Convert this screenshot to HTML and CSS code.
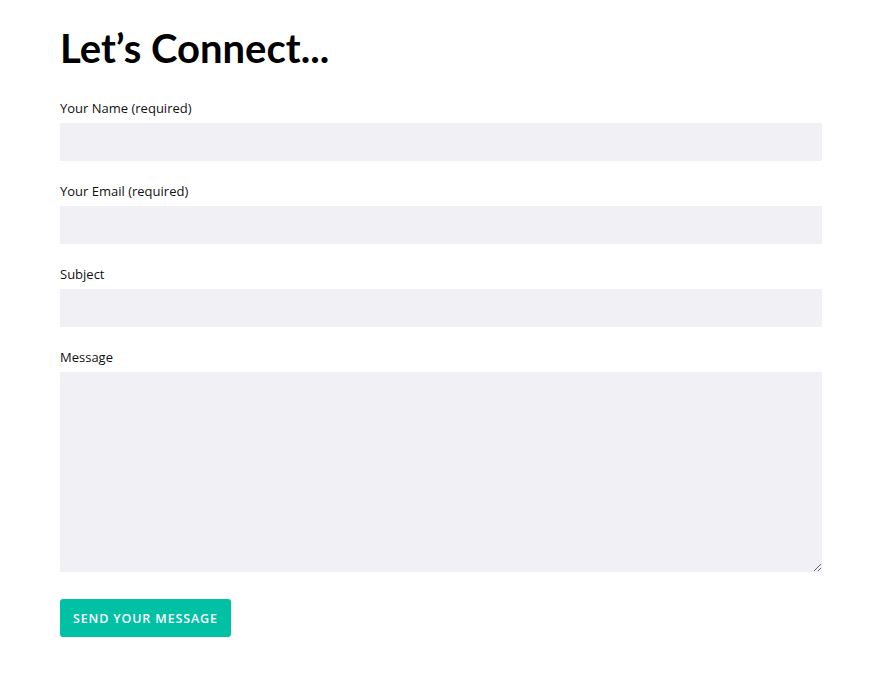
FILE: index.html
```html
<!DOCTYPE html>
<html>
<head>
<meta charset="utf-8">
<link rel="stylesheet" href="styles.css">
</head>
<body>
<main class="page">
  <h1 class="title">Let’s Connect...</h1>
  <form class="form">
    <div class="field">
      <label class="label">Your Name (required)</label>
      <input class="input" type="text">
    </div>
    <div class="field">
      <label class="label">Your Email (required)</label>
      <input class="input" type="text">
    </div>
    <div class="field">
      <label class="label">Subject</label>
      <input class="input" type="text">
    </div>
    <div class="field">
      <label class="label">Message</label>
      <textarea class="textarea"></textarea>
    </div>
    <div class="actions">
      <button class="button" type="button">SEND YOUR MESSAGE</button>
    </div>
  </form>
</main>
</body>
</html>
```
FILE: styles.css
```css
html, body {
  margin: 0;
  padding: 0;
  background: #ffffff;
}
.page {
  padding: 24px 50px 0 60px;
  width: 762px;
}
.title {
  margin: 0;
  font-family: Lato, "Liberation Sans", sans-serif;
  font-weight: 700;
  font-size: 40px;
  line-height: 48px;
  color: #000;
}
.form {
  margin-top: 26px;
  display: flex;
  flex-direction: column;
  gap: 20px;
}
.field {
  display: flex;
  flex-direction: column;
  gap: 5px;
}
.label {
  font-family: "Open Sans", sans-serif;
  font-size: 13px;
  line-height: 20px;
  color: #111;
}
.input, .textarea {
  display: block;
  box-sizing: border-box;
  width: 762px;
  border: none;
  background: #f0f0f5;
  margin: 0;
  padding: 0 10px;
  outline: none;
}
.input {
  height: 38px;
}
.textarea {
  height: 200px;
  resize: vertical;
}
.actions {
  margin-top: 7px;
}
.button {
  display: block;
  height: 38px;
  padding: 0 13px;
  border: none;
  border-radius: 3px;
  background: #00c1a4;
  color: #fff;
  font-family: "Open Sans", sans-serif;
  font-weight: 600;
  font-size: 12.5px;
  letter-spacing: 0.85px;
}
```
